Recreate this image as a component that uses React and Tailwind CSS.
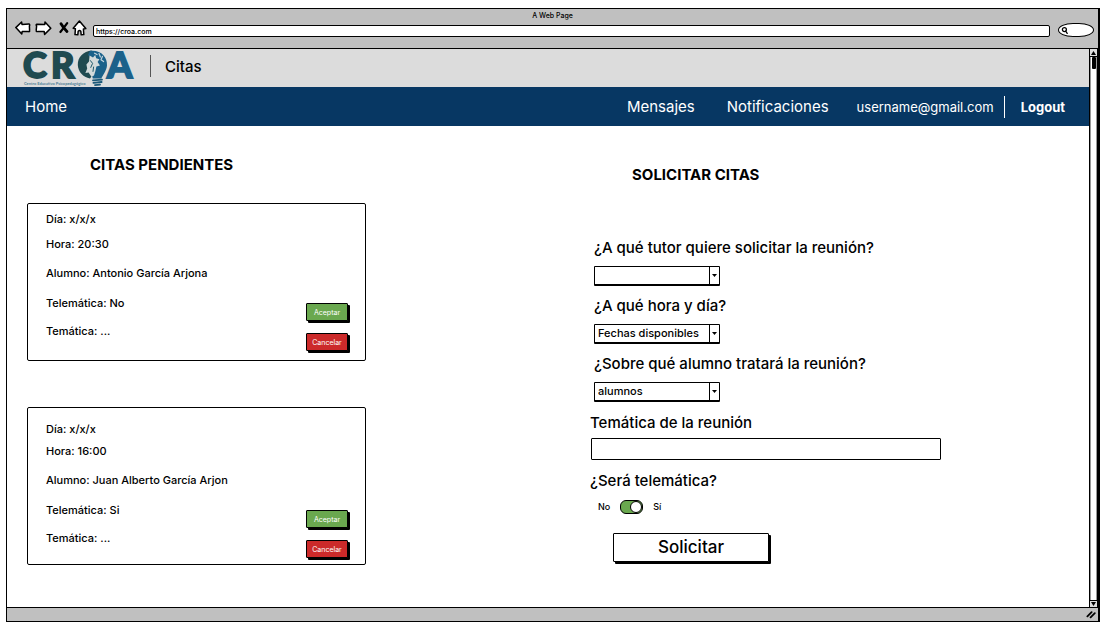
import React from "react";

const citas = [
  {
    dia: "x/x/x",
    hora: "20:30",
    alumno: "Antonio García Arjona",
    telematica: "No",
    tematica: "...",
  },
  {
    dia: "x/x/x",
    hora: "16:00",
    alumno: "Juan Alberto García Arjon",
    telematica: "Si",
    tematica: "...",
    compacta: true,
  },
];

function BrowserBar() {
  return (
    <div className="flex h-10 shrink-0 flex-col border-b border-black bg-[#c0c0c0]">
      <p className="h-2.5 text-center text-[7px] leading-[14px] font-medium">A Web Page</p>
      <div className="flex items-center pr-1 pl-2">
        <button type="button" aria-label="Atrás" className="mr-1">
          <svg width="16" height="16" viewBox="0 0 16 16" fill="#fff" stroke="#000" strokeWidth="1.5" strokeLinejoin="round">
            <path d="M0.8 7.6 L6.6 2 L7 4.4 L13.8 4 Q15.2 4.2 14.4 6 L14.6 10.4 Q14.8 11.8 13.6 11.6 L7.2 11.4 L6.8 14 Z" />
          </svg>
        </button>
        <button type="button" aria-label="Adelante" className="mr-1.5">
          <svg width="17" height="16" viewBox="0 0 17 16" fill="#fff" stroke="#000" strokeWidth="1.5" strokeLinejoin="round">
            <path d="M15.8 8.2 L10 2 L9.8 4.4 L1.8 4.2 Q0.6 4.6 1.6 6 L1.2 10.4 Q1 11.8 2.6 11.6 L9.2 11.6 L9.6 14.4 Z" />
          </svg>
        </button>
        <button type="button" aria-label="Detener" className="mr-0.5">
          <svg width="12" height="16" viewBox="0 0 12 16" fill="none" stroke="#000" strokeWidth="2.8" strokeLinecap="round">
            <path d="M3 3.8 Q5.5 8 9 11.6" />
            <path d="M9.2 3.2 Q6.5 7 2.4 12" strokeWidth="2.2" />
          </svg>
        </button>
        <button type="button" aria-label="Inicio" className="mr-1.5">
          <svg width="15" height="16" viewBox="0 0 15 16" fill="#fff" stroke="#000" strokeWidth="1.5" strokeLinejoin="round">
            <path d="M7.4 1 L1.2 8.2 L3.4 8.8 L3 14.6 L5.8 14.8 L6.2 11.2 Q7.6 9.6 8.8 11.2 L9.2 14.8 L11.8 14.6 L11.4 9 L13.8 8.6 Z" />
          </svg>
        </button>
        <input
          aria-label="Dirección"
          defaultValue="https://croa.com"
          className="mt-1.5 h-3 min-w-0 flex-1 rounded-[2px] border border-black bg-white pl-0.5 text-[7px] leading-none font-medium outline-none"
        />
        <label className="mt-1 ml-2 flex h-3.5 w-9 shrink-0 items-center rounded-[50%/60%] border border-black bg-white pl-0.5">
          <svg width="7" height="9" viewBox="0 0 7 9" fill="none" stroke="#000" strokeWidth="1.3" strokeLinecap="round">
            <circle cx="3.4" cy="3.6" r="2" />
            <path d="M4.8 5.4 L6.2 7.4" />
          </svg>
          <input aria-label="Buscar" className="w-4 bg-transparent text-[7px] outline-none" />
        </label>
      </div>
    </div>
  );
}

function Logo() {
  return (
    <svg width="112" height="38" viewBox="0 0 112 38" role="img" aria-label="CROA" fontFamily="Lato, sans-serif" className="overflow-visible">
      <g fontSize="36" fontWeight="900" strokeWidth="1.8">
        <text x="-1 27" y="29" fill="#1f4a50" stroke="#1f4a50">CR</text>
        <text x="83" y="29" fill="#1b618a" stroke="#1b618a">A</text>
      </g>
      <path d="M68 1.6 C59 2.4 53.6 8.4 53.8 16 C54.2 23 59 28 66 29.4 L70 24 L66 4 Z" fill="#1f4a50" />
      <path d="M66 1.8 C77 0.6 83.6 8 83 16.4 C82.4 22.4 78.6 26 77.4 29.6 L68.8 29.6 L67.4 24 L73.6 15 L64 6 Z" fill="#1b618a" />
      <path d="M65.6 6.4 L69 8.4 L71.2 6 L72.2 9.2 L75.4 10.2 L73.6 13 L76 16.6 L72.4 17.6 L71.4 22 L70 26.6 L67.4 27.8 L64.6 23.4 L61.4 24 L63.2 19.4 L62.4 15.6 L65 12.6 Z" fill="#d3dadb" />
      <path d="M66.4 11.6 L68.6 14.4 L66.8 18.4 M69.6 18 L69 22.4" fill="none" stroke="#1f5a6c" strokeWidth="1" strokeLinecap="round" />
      <path d="M70.6 4.2 L73 5.6 M75 4.6 L76.4 8 M78.4 7.4 L77 10.8 L79.6 12.6" fill="none" stroke="#c5d5de" strokeWidth="1.2" strokeLinecap="round" strokeLinejoin="round" />
      <path d="M69 31.4 L78 30.6 M69.4 33.8 L77.6 33 M71 36.2 L76 35.6" stroke="#1b5878" strokeWidth="1.8" strokeLinecap="round" />
      <text x="0" y="36" fontSize="4" fontWeight="700" fill="#4f7f97">Centro Educativo Psicopedagógico</text>
    </svg>
  );
}

function Row({ label, value, className }) {
  return (
    <div className={className}>
      <dt className="inline">{label}: </dt>
      <dd className="inline">{value}</dd>
    </div>
  );
}

function Accion({ children, className }) {
  return (
    <button
      type="button"
      className={`h-[18px] w-[42px] rounded-[1px] border border-black text-[7px] leading-none text-white shadow-[2px_2px_0_#000] ${className}`}
    >
      {children}
    </button>
  );
}

function Cita({ cita }) {
  return (
    <li
      className={`flex h-[158px] items-end justify-between rounded-[2px] border border-black pr-[17px] pl-[18px] ${
        cita.compacta ? "pb-1.5" : "pb-[9px]"
      }`}
    >
      <dl className={`self-start text-[11px] leading-4 font-medium ${cita.compacta ? "pt-[13px]" : "pt-[7px]"}`}>
        <Row label="Día" value={cita.dia} className={cita.compacta ? "mb-1.5" : "mb-[9px]"} />
        <Row label="Hora" value={cita.hora} className="mb-[13px]" />
        <Row label="Alumno" value={cita.alumno} className="mb-3.5" />
        <Row label="Telemática" value={cita.telematica} className="mb-3" />
        <Row label="Temática" value={cita.tematica} />
      </dl>
      <div className="flex flex-col gap-3">
        <Accion className="bg-[#6aa84f]">Aceptar</Accion>
        <Accion className="bg-[#cc2a2a]">Cancelar</Accion>
      </div>
    </li>
  );
}

function Selector({ id, label, options }) {
  return (
    <div className="mb-2.5 pl-1">
      <label htmlFor={id} className="block text-[15px] leading-5 font-medium">
        {label}
      </label>
      <div className="mt-2 flex h-5 w-[126px] rounded-[1px] border border-b-2 border-black">
        <select id={id} className="min-w-0 flex-1 appearance-none bg-white pb-0.5 pl-[3px] text-[11px] leading-4 font-medium outline-none">
          {options.map((option) => (
            <option key={option}>{option}</option>
          ))}
        </select>
        <span className="pointer-events-none flex w-2.5 items-center justify-center border-l border-black">
          <svg width="5" height="3" viewBox="0 0 5 3">
            <path d="M0 0 H5 L2.5 3 Z" />
          </svg>
        </span>
      </div>
    </div>
  );
}

function Formulario() {
  return (
    <form className="pt-[53px]">
      <Selector id="tutor" label="¿A qué tutor quiere solicitar la reunión?" options={[""]} />
      <Selector id="fecha" label="¿A qué hora y día?" options={["Fechas disponibles"]} />
      <Selector id="alumno" label="¿Sobre qué alumno tratará la reunión?" options={["alumnos"]} />
      <label htmlFor="tematica" className="block pt-px text-[15px] leading-5 font-medium">
        Temática de la reunión
      </label>
      <input id="tematica" className="mt-[5px] ml-px block h-[22px] w-[350px] rounded-[1px] border border-black bg-white px-1 text-[11px] outline-none" />
      <fieldset className="mt-[11px]">
        <legend className="text-[15px] leading-5 font-medium">¿Será telemática?</legend>
        <label className="mt-2 ml-2 flex w-fit items-center gap-2.5 text-[9px] leading-4 font-medium">
          No
          <input
            type="checkbox"
            role="switch"
            defaultChecked
            className="relative h-3.5 w-[23px] appearance-none rounded-[6px] border border-black bg-white before:absolute before:top-0 before:left-0 before:h-3 before:w-3 before:rounded-full before:border before:border-black before:bg-white checked:bg-[#6aa84f] checked:before:right-0 checked:before:left-auto"
          />
          Sí
        </label>
      </fieldset>
      <button
        type="button"
        className="mt-[18px] ml-[23px] h-[29px] w-[156px] rounded-[1px] border border-black bg-white text-[17px] leading-none font-medium shadow-[2px_2px_0_#000]"
      >
        Solicitar
      </button>
    </form>
  );
}

function Scrollbar() {
  return (
    <div aria-hidden="true" className="flex w-[9px] shrink-0 flex-col border-x border-black bg-white">
      <div className="flex h-2 items-center justify-center border-b border-black bg-[#ddd]">
        <svg width="5" height="4" viewBox="0 0 5 4">
          <path d="M2.5 0 L5 4 H0 Z" />
        </svg>
      </div>
      <div className="flex-1 border-x border-[#999]">
        <div className="mx-auto h-3 w-1 rounded-[1px] bg-black" />
      </div>
      <div className="flex h-[7px] items-center justify-center border-t border-black bg-[#ddd]">
        <svg width="5" height="4" viewBox="0 0 5 4">
          <path d="M0 0 H5 L2.5 4 Z" />
        </svg>
      </div>
    </div>
  );
}

export default function App() {
  return (
    <div className="flex min-h-screen flex-col bg-white pt-2 pr-0.5 pb-1 pl-1.5 font-[Inter,sans-serif] text-black">
      <div className="flex flex-1 flex-col border border-r-2 border-black">
        <BrowserBar />
        <div className="flex flex-1">
          <div className="flex min-w-0 flex-1 flex-col">
            <header className="flex h-[38px] shrink-0 items-center bg-[#dcdcdc] pl-[17px]">
              <Logo />
              <span className="mb-1 ml-3.5 h-[22px] w-px bg-[#555]" />
              <h1 className="mb-0.5 ml-3.5 text-[15px] leading-5 font-medium">Citas</h1>
            </header>
            <nav className="flex h-[39px] shrink-0 items-center bg-[#073763] pr-6 pl-[18px] text-[15px] leading-5 text-white">
              <a href="#home" className="mr-auto">Home</a>
              <a href="#mensajes">Mensajes</a>
              <a href="#notificaciones" className="ml-8">Notificaciones</a>
              <a href="#cuenta" className="ml-7 text-[13px]">username@gmail.com</a>
              <span className="ml-2.5 h-[22px] w-px bg-white" />
              <a href="#logout" className="ml-4 text-[13px] font-bold">Logout</a>
            </nav>
            <main className="grid flex-1 grid-cols-[583fr_499fr] pb-10">
              <section className="pt-[29px] pl-5">
                <h2 className="pl-[63px] text-[15px] leading-5 font-bold">CITAS PENDIENTES</h2>
                <ul className="mt-7 flex w-[339px] flex-col gap-[46px]">
                  {citas.map((cita) => (
                    <Cita key={cita.alumno} cita={cita} />
                  ))}
                </ul>
              </section>
              <section className="pt-[39px]">
                <h2 className="pl-[42px] text-[15px] leading-5 font-bold">SOLICITAR CITAS</h2>
                <Formulario />
              </section>
            </main>
          </div>
          <Scrollbar />
        </div>
        <footer className="flex h-3.5 shrink-0 items-center justify-end border-t border-black bg-[#c0c0c0] pr-0.5">
          <svg width="10" height="9" viewBox="0 0 10 9" stroke="#000" strokeWidth="1.8" strokeLinecap="round">
            <path d="M1.4 6.4 L5.6 2.2 M4.6 7.4 L8.8 3.2" />
          </svg>
        </footer>
      </div>
    </div>
  );
}
